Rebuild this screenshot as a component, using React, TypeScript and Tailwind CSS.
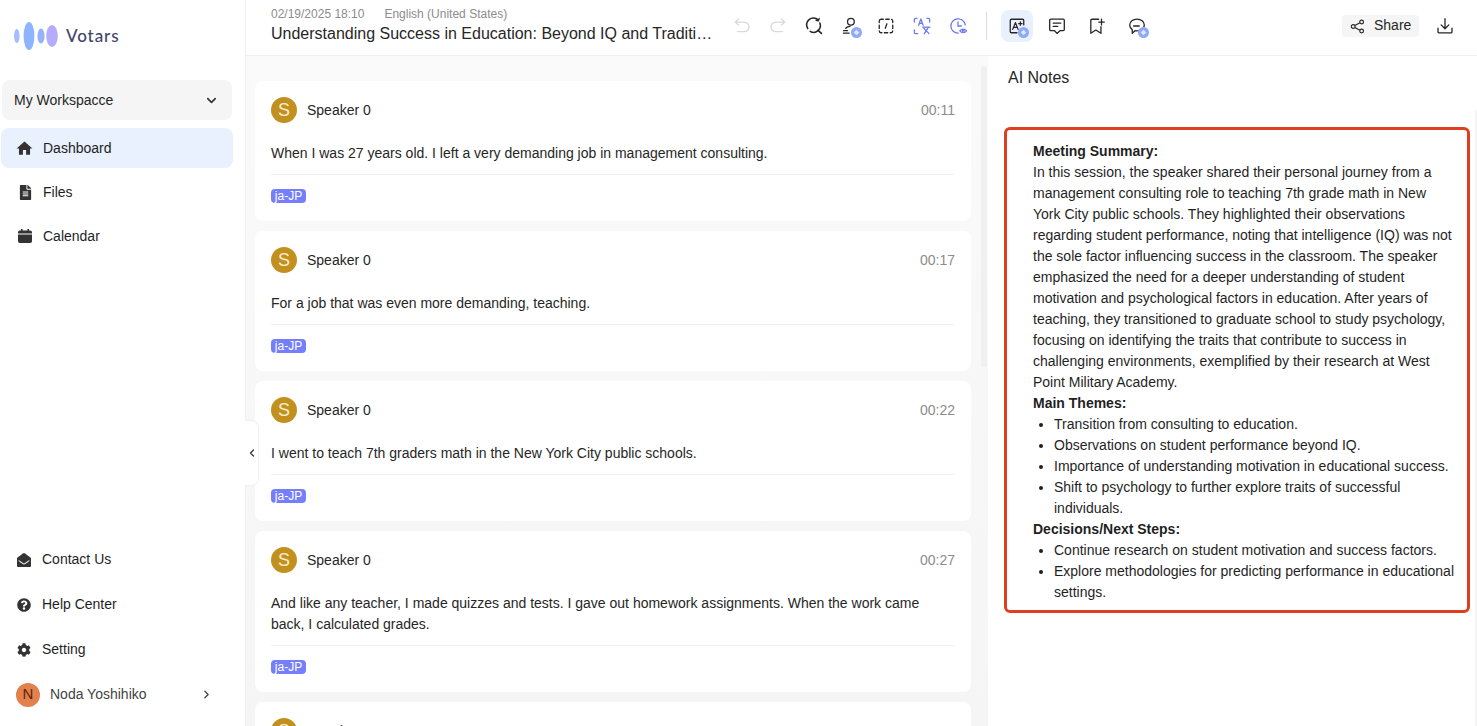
import React from "react";
import { FaFileAlt, FaEnvelopeOpen, FaQuestionCircle, FaCog } from "react-icons/fa";
import { MdHome } from "react-icons/md";
import { ChevronDown, ChevronRight, ChevronLeft } from "lucide-react";

const Badge = () => (
  <span className="absolute right-[-3px] bottom-[-3px] flex h-[11px] w-[11px] items-center justify-center rounded-full bg-[#8fa9fa]">
    <svg viewBox="0 0 10 10" className="h-[11px] w-[11px]"><path d="M5 2.4 7.6 5 5 7.6 2.4 5Z" fill="#dfe6ff" /></svg>
  </span>
);

const Ico = ({ children, badge, color = "#262626" }: { children: React.ReactNode; badge?: boolean; color?: string }) => (
  <span className="relative flex h-[18px] w-[18px] items-center justify-center">
    <svg viewBox="0 0 16 16" width="18" height="18" fill="none" stroke={color} strokeWidth="1.15" strokeLinecap="round" strokeLinejoin="round">
      {children}
    </svg>
    {badge && <Badge />}
  </span>
);

const tools = [
  <Ico color="#d9d9d9"><path d="M2 4.5h8a4 4 0 0 1 0 8.5H4M2 4.5 5 1.8M2 4.5l3 2.7" /></Ico>,
  <Ico color="#d9d9d9"><path d="M14 4.5H6a4 4 0 0 0 0 8.5h6M14 4.5 11 1.8M14 4.5l-3 2.7" /></Ico>,
  <Ico><path d="M2.4 10.2A6 6 0 0 1 11.6 2.6" strokeWidth="1.4" /><path d="M13.2 5.4A6 6 0 0 1 4.6 12.8" strokeWidth="1.4" /><path d="m11.6 11.8 3 2.8" strokeWidth="1.5" /><path d="M12.6 1.2 12 3.4 9.8 3" /></Ico>,
  <Ico badge><circle cx="8.8" cy="4.2" r="3" /><path d="M2.2 14.4h5M2.2 12.2h3.6M4.2 10c.8-1 2.2-1.6 3.8-1.6" /></Ico>,
  <Ico><rect x="2" y="2" width="12" height="12" rx="1.6" strokeDasharray="3 2.2" strokeDashoffset="1" /><path d="M8.8 6 7.4 10" /></Ico>,
  <Ico color="#6b78f5"><path d="M1.2 4.5V2.2a1 1 0 0 1 1-1H3.6M12.4 1.2h1.4a1 1 0 0 1 1 1v2.3M1.2 11.5v2.3a1 1 0 0 0 1 1h2" /><path d="M5 7.4l2-5.6 2 5.6M5.7 5.6h2.6" /><path d="M8.6 9h6.4M10 14.8l3.8-5.8M9.6 10l4.6 4.8" /></Ico>,
  <Ico color="#6b78f5"><path d="M8.2 14.4A6.4 6.4 0 1 1 14.4 7" /><path d="M8 4.4V8h3" /><path d="M9.6 12.4c1.6-2.2 4.6-2.2 6.2 0-1.6 2.2-4.6 2.2-6.2 0Z" strokeWidth="1" /><circle cx="12.7" cy="12.4" r="0.9" strokeWidth="1" /></Ico>,
];

const Card = ({ time, text }: { time: string; text: string }) => (
  <div className="shrink-0 rounded-lg bg-white px-4 pt-4 pb-[18px]">
    <div className="flex h-[26px] items-center">
      <span className="flex h-[26px] w-[26px] items-center justify-center rounded-full bg-[#c2901f] text-[18px] text-[#fbeecb]">S</span>
      <span className="ml-[10px] text-[14px] text-[#262626]">Speaker 0</span>
      <span className="ml-auto text-[14px] text-[#8c8c8c]">{time}</span>
    </div>
    <p className="mt-5 min-h-[21px] text-[14px] leading-[21px] text-[#262626]">{text}</p>
    <div className="mt-[10px] mb-[14px] border-t border-[#f0f0f0]" />
    <span className="flex h-[14px] w-[35px] items-center justify-center rounded-[4px] bg-[#767ffb] text-[12px] leading-[14px] text-white">ja-JP</span>
  </div>
);

const NavRow = ({ icon, label }: { icon: React.ReactNode; label: string }) => (
  <div className="flex h-[45px] items-center pl-4 text-[14px] text-[#1f1f1f]">
    <span className="flex w-4 justify-center text-[#333333]">{icon}</span>
    <span className="ml-[10px]">{label}</span>
  </div>
);

export default function App() {
  return (
    <div className="flex h-screen w-full overflow-hidden bg-white font-['Liberation_Sans',Arial,sans-serif]">
      <aside className="flex w-[246px] shrink-0 flex-col border-r border-[#f0f0f0] pb-[9px]">
        <div className="flex h-[72px] items-center pl-[14px]">
          <svg width="46" height="30" viewBox="0 0 46 30">
            <defs>
              <linearGradient id="lg" x1="0" x2="1" y1="0" y2="0">
                <stop offset="0" stopColor="#9cbcff" />
                <stop offset="0.5" stopColor="#8fb4ff" />
                <stop offset="1" stopColor="#bcaafb" />
              </linearGradient>
            </defs>
            <path d="M0 15h44" stroke="url(#lg)" strokeWidth="2" />
            <ellipse cx="2.8" cy="15" rx="2.8" ry="7" fill="#a3bffd" />
            <ellipse cx="15" cy="15" rx="5.4" ry="14" fill="#8fb4ff" />
            <ellipse cx="27" cy="15" rx="3.6" ry="7.4" fill="#95b3fd" />
            <ellipse cx="38" cy="15" rx="5.8" ry="11" fill="#b5acfc" />
          </svg>
          <span className="ml-[6px] font-['Lato',sans-serif] text-[17px] font-medium tracking-[0.9px] text-[#3f4668]">Votars</span>
        </div>
        <div className="ml-[2px] mt-2 flex h-10 w-[230px] items-center justify-between rounded-lg bg-[#f5f5f5] pl-3 pr-[13px] text-[14px] text-[#262626]">
          My Workspacce
          <ChevronDown size={15} strokeWidth={2.6} color="#333333" />
        </div>
        <div className="ml-[1px] mt-2 flex h-10 w-[232px] items-center rounded-lg bg-[#e9f0fe] pl-[14px] text-[14px] text-[#1f1f1f]">
          <MdHome size={19} color="#333333" />
          <span className="ml-[9px]">Dashboard</span>
        </div>
        <div className="flex h-11 items-center pl-[17px] pt-[4px] text-[14px] text-[#1f1f1f]">
          <span className="flex w-4 justify-center"><FaFileAlt size={15} color="#333333" /></span>
          <span className="ml-[10px]">Files</span>
        </div>
        <div className="flex h-11 items-center pl-[17px] pt-[4px] text-[14px] text-[#1f1f1f]">
          <span className="flex w-4 justify-center">
            <svg width="14" height="14" viewBox="0 0 14 14" fill="#333333">
              <path d="M3 0h1.6v1.6h4.8V0H11v1.6h1.2A1.8 1.8 0 0 1 14 3.4v1.2H0V3.4a1.8 1.8 0 0 1 1.8-1.8H3Z" />
              <path d="M0 5.4h14v6.8a1.8 1.8 0 0 1-1.8 1.8H1.8A1.8 1.8 0 0 1 0 12.2Z" />
            </svg>
          </span>
          <span className="ml-[10px]">Calendar</span>
        </div>
        <div className="mt-auto flex flex-col">
          <NavRow icon={<FaEnvelopeOpen size={14} />} label="Contact Us" />
          <NavRow icon={<FaQuestionCircle size={14} />} label="Help Center" />
          <NavRow icon={<FaCog size={14} />} label="Setting" />
          <div className="flex h-[45px] items-center pl-4 pr-[32px] text-[14px] text-[#434343]">
            <span className="flex h-6 w-6 items-center justify-center rounded-full bg-[#e2804e] text-[15px] text-[#5f2408]">N</span>
            <span className="ml-[10px]">Noda Yoshihiko</span>
            <ChevronRight size={13} strokeWidth={2.4} color="#434343" className="ml-auto" />
          </div>
        </div>
      </aside>

      <main className="flex min-w-0 flex-1 flex-col">
        <header className="flex h-[56px] shrink-0 items-center border-b border-[#f0f0f0] pb-[3px] pl-[25px]">
          <div className="w-[442px] shrink-0 self-start pt-[6px]">
            <div className="flex h-4 items-center gap-[20px] text-[12px] text-[#8c8c8c]">
              <span>02/19/2025 18:10</span>
              <span>English (United States)</span>
            </div>
            <div className="mt-[1px] truncate text-[16px] leading-[22px] text-[#262626]">
              Understanding Success in Education: Beyond IQ and Traditional Metrics
            </div>
          </div>
          <div className="ml-[20px] flex items-center gap-[18px]">
            {tools.map((t, i) => <span key={i}>{t}</span>)}
          </div>
          <div className="ml-[19px] h-7 w-px bg-[#d9d9d9]" />
          <div className="ml-[14px] flex h-8 w-8 items-center justify-center rounded-lg bg-[#e9f0fe]">
            <Ico badge><path d="M14 7V3a1 1 0 0 0-1-1H3a1 1 0 0 0-1 1v10a1 1 0 0 0 1 1h5" /><path d="M4.2 11 6.6 5 9 11M5 9.2h3.2" /><path d="M11 4.4v3M9.5 5.9h3" /></Ico>
          </div>
          <div className="ml-[15px] flex items-center gap-[22px]">
            <Ico><path d="M2.5 1.8h11a1 1 0 0 1 1 1v8.4a1 1 0 0 1-1 1h-2.8L8 14.6l-2.2-2.4H2.5a1 1 0 0 1-1-1V2.8a1 1 0 0 1 1-1Z" /><path d="M4.6 5.4h6.8M4.6 8.4h4" /></Ico>
            <Ico><path d="M9.5 2H3.5a1 1 0 0 0-1 1v11.5L7 11.6l4.5 2.9V8.5" /><path d="M12 2v5M9.5 4.5h5" /></Ico>
            <Ico badge><path d="M8 1.8c3.6 0 6.5 2.4 6.5 5.4s-2.9 5.2-6.5 5.2c-.6 0-1.2 0-1.8-.2L3.8 14.4V11.2C2.3 10.2 1.5 8.8 1.5 7.2c0-3 2.9-5.4 6.5-5.4Z" /><path d="M5 8h5" /></Ico>
          </div>
          <div className="ml-[196px] flex h-[22px] w-[77px] items-center rounded bg-[#f5f5f5] pb-[2px] pl-2 text-[14px] text-[#262626]">
            <svg width="15" height="15" viewBox="0 0 16 16" fill="none" stroke="#262626" strokeWidth="1.2" className="translate-y-[1px]">
              <circle cx="3.4" cy="8" r="2" /><circle cx="12.4" cy="3.2" r="2" /><circle cx="12.4" cy="12.8" r="2" /><path d="m5.2 7 5.4-2.9M5.2 9l5.4 2.9" />
            </svg>
            <span className="ml-[9px]">Share</span>
          </div>
          <span className="ml-[17px] flex">
            <Ico><path d="M8 1.5v8.6M4.6 7 8 10.4 11.4 7" /><path d="M1.8 10v3.4a.8.8 0 0 0 .8.8h10.8a.8.8 0 0 0 .8-.8V10" /></Ico>
          </span>
        </header>

        <div className="flex min-h-0 flex-1">
          <section className="relative flex w-[742px] shrink-0 bg-gradient-to-b from-[#fafafa] to-[#f5f5f5]">
            <div className="flex w-[734px] shrink-0 flex-col gap-[10px] overflow-hidden pl-[9px] pr-[9px] pt-[25px]">
              <Card time="00:11" text="When I was 27 years old. I left a very demanding job in management consulting." />
              <Card time="00:17" text="For a job that was even more demanding, teaching." />
              <Card time="00:22" text="I went to teach 7th graders math in the New York City public schools." />
              <Card time="00:27" text="And like any teacher, I made quizzes and tests. I gave out homework assignments. When the work came back, I calculated grades." />
              <Card time="00:33" text="" />
            </div>
            <div className="absolute right-[1px] top-[10px] h-[301px] w-[6px] rounded-full bg-[#f0f0f0]" />
            <button className="absolute left-[-1px] top-[364px] flex h-[66px] w-[14px] items-center justify-center rounded-r-lg border border-l-0 border-[#f0f0f0] bg-white">
              <ChevronLeft size={12} strokeWidth={2.6} color="#333333" />
            </button>
          </section>

          <section className="relative flex min-w-0 flex-1 flex-col pl-4 pr-[7px]">
            <div className="flex h-[44px] items-center pl-1 text-[16px] text-[#262626]">AI Notes</div>
            <div className="mt-[27px] rounded-[6px] border-[3px] border-[#dc401e] pl-[26px] pr-[11px] pt-[11px] pb-[7px] text-[14px] leading-[21px] text-[#1f1f1f]">
              <p className="font-bold">Meeting Summary:</p>
              <p>In this session, the speaker shared their personal journey from a management consulting role to teaching 7th grade math in New York City public schools. They highlighted their observations regarding student performance, noting that intelligence (IQ) was not the sole factor influencing success in the classroom. The speaker emphasized the need for a deeper understanding of student motivation and psychological factors in education. After years of teaching, they transitioned to graduate school to study psychology, focusing on identifying the traits that contribute to success in challenging environments, exemplified by their research at West Point Military Academy.</p>
              <p className="font-bold">Main Themes:</p>
              <ul className="list-disc pl-[21px]">
                <li>Transition from consulting to education.</li>
                <li>Observations on student performance beyond IQ.</li>
                <li>Importance of understanding motivation in educational success.</li>
                <li>Shift to psychology to further explore traits of successful individuals.</li>
              </ul>
              <p className="font-bold">Decisions/Next Steps:</p>
              <ul className="list-disc pl-[21px]">
                <li>Continue research on student motivation and success factors.</li>
                <li>Explore methodologies for predicting performance in educational settings.</li>
              </ul>
            </div>
            <div className="absolute right-0 top-[54px] bottom-0 w-[2px] bg-[#f5f5f5]" />
          </section>
        </div>
      </main>
    </div>
  );
}
